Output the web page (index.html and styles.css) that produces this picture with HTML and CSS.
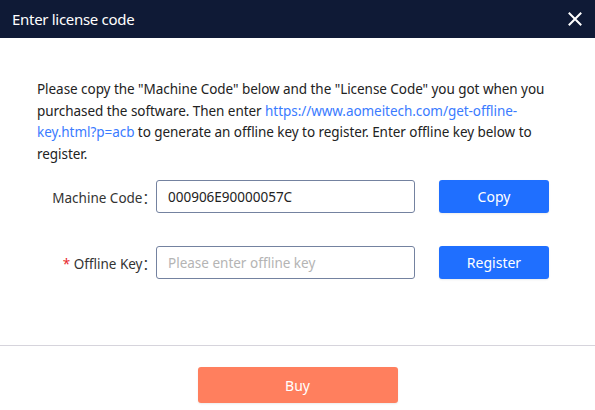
FILE: index.html
```html
<!DOCTYPE html>
<html>
<head>
<meta charset="utf-8">
<link rel="stylesheet" href="styles.css">
</head>
<body>
<div class="dialog">
  <div class="header">
    <span class="title">Enter license code</span>
    <svg class="close" width="14" height="14" viewBox="0 0 14 14"><path d="M1.5 1.5 L12.5 12.5 M12.5 1.5 L1.5 12.5" stroke="#fff" stroke-width="2" stroke-linecap="square"/></svg>
  </div>
  <div class="body">
    <p class="intro">Please copy the "Machine Code" below and the "License Code" you got when you purchased the software. Then enter <span class="link">https://www.aomeitech.com/get-offline-</span><br><span class="link">key.html?p=acb</span> to generate an offline key to register. Enter offline key below to register.</p>
    <div class="form">
      <div class="row">
        <label class="label">Machine Code<span class="colon">：</span></label>
        <div class="input">000906E90000057C</div>
        <button class="btn">Copy</button>
      </div>
      <div class="row">
        <label class="label"><span class="req">*</span> Offline Key<span class="colon">：</span></label>
        <div class="input placeholder">Please enter offline key</div>
        <button class="btn">Register</button>
      </div>
    </div>
  </div>
  <div class="footer">
    <button class="buy">Buy</button>
  </div>
</div>
</body>
</html>
```
FILE: styles.css
```css
* { box-sizing: border-box; }
html, body { margin: 0; padding: 0; background: #fff; }
body {
  font-family: "Noto Sans", "Open Sans", sans-serif;
  color: #222;
  width: 595px;
  height: 410px;
  overflow: hidden;
}
.dialog { display: flex; flex-direction: column; height: 410px; }
.header {
  height: 38px;
  background: #0f1a36;
  display: flex;
  align-items: center;
  justify-content: space-between;
  padding: 0 13px 0 12px;
  color: #fff;
}
.title { font-size: 15px; letter-spacing: -0.3px; }
.close { display: block; }
.body { padding: 41px 37px 0 37px; height: 308px; border-bottom: 1px solid #d6d4dc; }
.intro {
  margin: 0;
  font-size: 13.5px;
  line-height: 21.5px;
  color: #222;
  letter-spacing: -0.05px;
}
.link { color: #3a7bff; }
.form { margin-top: 15px; display: flex; flex-direction: column; gap: 33px; }
.row { display: flex; align-items: center; height: 33px; }
.label {
  width: 119px;
  text-align: right;
  font-size: 13.5px;
  color: #333;
  white-space: nowrap;
}
.colon { font-family: "Noto Sans CJK SC", sans-serif; }
.req { color: #e8262b; }
.input {
  width: 259px;
  height: 33px;
  border: 1px solid #7482a0;
  border-radius: 3px;
  padding: 0 11px;
  display: flex;
  align-items: center;
  font-size: 13.5px;
  color: #222;
}
.placeholder { color: #b4b4b4; }
.btn {
  margin-left: 24px;
  width: 110px;
  height: 33px;
  border: none;
  border-radius: 3px;
  background: #1f6fff;
  color: #fff;
  font-family: inherit;
  font-size: 14px;
  box-shadow: 0 1px 2px rgba(0,0,0,0.08);
}
.footer { flex: 1; display: flex; justify-content: center; padding-top: 21px; }
.buy {
  width: 200px;
  height: 36px;
  border: none;
  border-radius: 3px;
  background: #ff7f5e;
  color: #fff;
  font-family: inherit;
  font-size: 14px;
  box-shadow: 0 1px 2px rgba(0,0,0,0.08);
}
```
